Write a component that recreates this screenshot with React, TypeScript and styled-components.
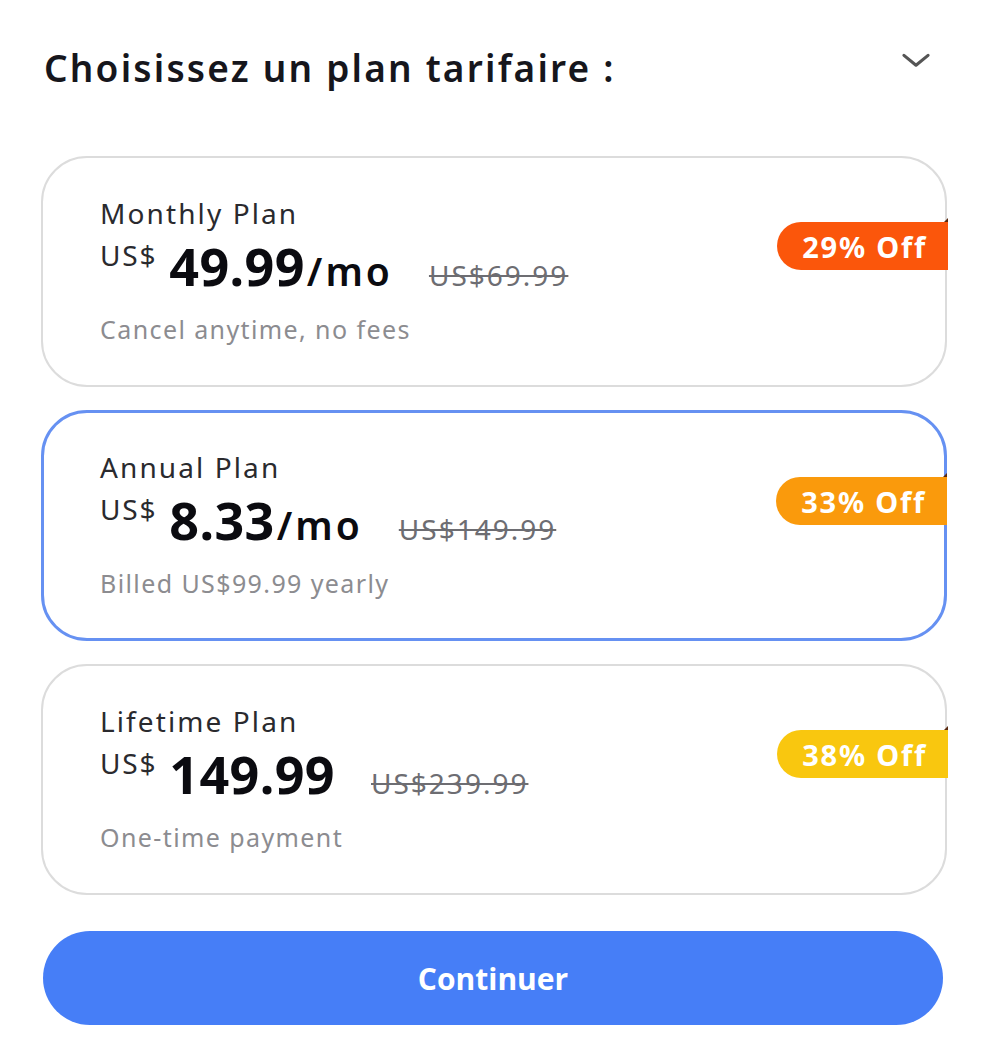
import React, {useState} from 'react';
import styled, {createGlobalStyle} from 'styled-components';

const GlobalStyle = createGlobalStyle`
	html, body {
		margin: 0;
		padding: 0;
		background: #ffffff;
		font-family: "Noto Sans", sans-serif;
		color: #1c1c24;
	}
`;

const Page = styled.div`
	width: 1000px;
	box-sizing: border-box;
	padding: 36px 54px 0 42px;
	display: flex;
	flex-direction: column;
`;

const Header = styled.div`
	display: flex;
	align-items: center;
	justify-content: space-between;
	height: 62px;
	padding-left: 2px;
	margin-bottom: 58px;
`;

const Title = styled.h1`
	margin: 0;
	font-size: 37px;
	font-weight: 600;
	letter-spacing: 2.2px;
	color: #16161c;
`;

const Chevron = styled.button`
	border: none;
	background: none;
	padding: 0;
	margin-right: 10px;
	margin-top: -12px;
	width: 40px;
	height: 40px;
	display: flex;
	align-items: center;
	justify-content: center;
	cursor: pointer;
	color: #555;
`;

const PlanList = styled.div`
	display: flex;
	flex-direction: column;
	gap: 23px;
	margin-left: -1px;
	width: 906px;
`;

const Card = styled.div<{$selected: boolean}>`
	position: relative;
	box-sizing: border-box;
	height: 231px;
	border-radius: 46px;
	border: ${p => (p.$selected ? '3px solid #6691f2' : '2px solid #dcdcdc')};
	padding: ${p => (p.$selected ? '37px 56px' : '38px 57px')};
	background: #fff;
	cursor: pointer;
	display: flex;
	flex-direction: column;
`;

const PlanName = styled.div`
	font-size: 28px;
	font-weight: 400;
	letter-spacing: 2.1px;
	color: #2a2a2e;
	line-height: 34px;
`;

const PriceRow = styled.div`
	display: flex;
	align-items: baseline;
	height: 60px;
`;

const Currency = styled.span`
	font-size: 28px;
	font-weight: 400;
	letter-spacing: 1.8px;
	color: #2a2a2e;
	align-self: flex-start;
	margin-top: 6px;
	margin-right: 12px;
`;

const Amount = styled.span`
	font-size: 52px;
	font-weight: 700;
	letter-spacing: 0.4px;
	color: #0b0b10;
`;

const Per = styled.span`
	font-size: 39px;
	font-weight: 600;
	letter-spacing: 3px;
	color: #0b0b10;
	margin-left: 2px;
`;

const OldPrice = styled.span`
	font-size: 28px;
	color: #6d6d72;
	letter-spacing: 2px;
	text-decoration: line-through;
	text-decoration-thickness: 2px;
	margin-left: 36px;
`;

const Note = styled.div`
	font-size: 25px;
	letter-spacing: 1.4px;
	color: #8c8c90;
	margin-top: 22px;
`;

const Badge = styled.div<{$color: string}>`
	position: absolute;
	right: -3px;
	top: 64px;
	height: 48px;
	padding: 0 21px 0 25px;
	border-radius: 24px 0 0 24px;
	background: ${p => p.$color};
	color: #fff;
	font-size: 29px;
	font-weight: 700;
	letter-spacing: 1.8px;
	display: flex;
	align-items: center;
	&::after {
		content: '';
		position: absolute;
		right: 0;
		top: -4px;
		border-left: 4px solid transparent;
		border-bottom: 4px solid #5a2a10;
	}
`;

const ContinueButton = styled.button`
	margin-top: 36px;
	margin-left: 1px;
	width: 900px;
	height: 94px;
	border: none;
	border-radius: 47px;
	background: #467ef7;
	color: #fff;
	font-family: "Open Sans", sans-serif;
	font-size: 30px;
	font-weight: 700;
	cursor: pointer;
`;

type Plan = {
	id: string;
	name: string;
	amount: string;
	per?: string;
	oldPrice: string;
	note: string;
	off: string;
	color: string;
};

const plans: Plan[] = [
	{id: 'monthly', name: 'Monthly Plan', amount: '49.99', per: '/mo', oldPrice: 'US$69.99', note: 'Cancel anytime, no fees', off: '29% Off', color: '#fb560b'},
	{id: 'annual', name: 'Annual Plan', amount: '8.33', per: '/mo', oldPrice: 'US$149.99', note: 'Billed US$99.99 yearly', off: '33% Off', color: '#fa9a0c'},
	{id: 'lifetime', name: 'Lifetime Plan', amount: '149.99', oldPrice: 'US$239.99', note: 'One-time payment', off: '38% Off', color: '#f9c70f'},
];

export default function App() {
	const [selected, setSelected] = useState('annual');

	return (
		<>
			<GlobalStyle/>
			<Page>
				<Header>
					<Title>Choisissez un plan tarifaire :</Title>
					<Chevron aria-label="Réduire">
						<svg width="34" height="34" viewBox="0 0 24 24" fill="none" stroke="#555" strokeWidth="2.2" strokeLinecap="round" strokeLinejoin="round">
							<path d="M3.5 8l8.5 7 8.5-7"/>
						</svg>
					</Chevron>
				</Header>
				<PlanList>
					{plans.map(plan => (
						<Card key={plan.id} $selected={selected === plan.id} onClick={() => setSelected(plan.id)}>
							<PlanName>{plan.name}</PlanName>
							<PriceRow>
								<Currency>US$</Currency>
								<Amount>{plan.amount}</Amount>
								{plan.per && <Per>{plan.per}</Per>}
								<OldPrice>{plan.oldPrice}</OldPrice>
							</PriceRow>
							<Note>{plan.note}</Note>
							<Badge $color={plan.color}>{plan.off}</Badge>
						</Card>
					))}
				</PlanList>
				<ContinueButton>Continuer</ContinueButton>
			</Page>
		</>
	);
}
